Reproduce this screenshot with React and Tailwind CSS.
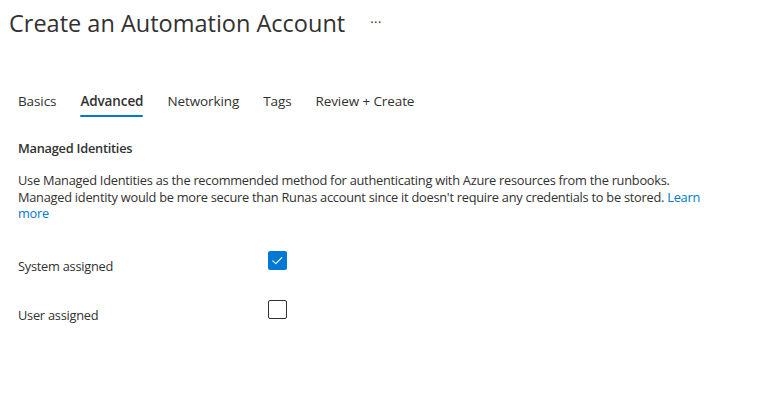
import React from 'react';

const tabs = ['Basics', 'Advanced', 'Networking', 'Tags', 'Review + Create'];

function Checkbox({ checked }) {
  if (checked) {
    return (
      <div className="w-[19px] h-[19px] rounded-[2px] bg-[#0078d4] -mt-[4px]">
        <svg width="19" height="19" viewBox="0 0 19 19" fill="none">
          <path d="M4.8 9.8 L7.8 12.6 L13.8 6.6" stroke="white" strokeWidth="1.1" strokeLinecap="round" strokeLinejoin="round" />
        </svg>
      </div>
    );
  }
  return <div className="w-[19px] h-[19px] rounded-[2px] border border-[#323130] bg-white -mt-[4px]" />;
}

export default function App() {
  return (
    <div className="w-[775px] h-[410px] bg-white text-[#323130] overflow-hidden" style={{ fontFamily: '"Open Sans", sans-serif' }}>
      <div className="flex items-center pl-[9px] pt-[8px] h-[38px]">
        <h1 className="text-[23.5px] font-normal leading-[32px]">Create an Automation Account</h1>
        <span className="ml-[25px] text-[13px] leading-none -mt-[2px] tracking-[0.5px]">···</span>
      </div>

      <div className="flex gap-[24px] pl-[18px] mt-[48px] text-[13.5px] tracking-[-0.1px]">
        {tabs.map((t) => (
          <div key={t} className={`flex flex-col ${t === 'Advanced' ? 'font-semibold' : ''}`}>
            <span className="leading-[20px] pt-[5px] pb-[4px]">{t}</span>
            <div className={`h-[2px] rounded-full ${t === 'Advanced' ? 'bg-[#0078d4]' : 'bg-transparent'}`} />
          </div>
        ))}
      </div>

      <div className="pl-[18px] text-[12.8px] tracking-[-0.25px]">
        <h2 className="font-semibold mt-[21px] leading-[20px]">Managed Identities</h2>
        <p className="mt-[14px] leading-[16.5px]">
          Use Managed Identities as the recommended method for authenticating with Azure resources from the runbooks.
          <br />
          Managed identity would be more secure than Runas account since it doesn't require any credentials to be stored.{' '}
          <span className="text-[#0078d4]">
            Learn
            <br />
            more
          </span>
        </p>

        <div className="flex flex-col mt-[33px] gap-[28px]">
          <div className="flex items-start">
            <span className="w-[250px] leading-[20px] pt-[1px]">System assigned</span>
            <Checkbox checked />
          </div>
          <div className="flex items-start">
            <span className="w-[250px] leading-[20px] pt-[1px]">User assigned</span>
            <Checkbox />
          </div>
        </div>
      </div>
    </div>
  );
}
